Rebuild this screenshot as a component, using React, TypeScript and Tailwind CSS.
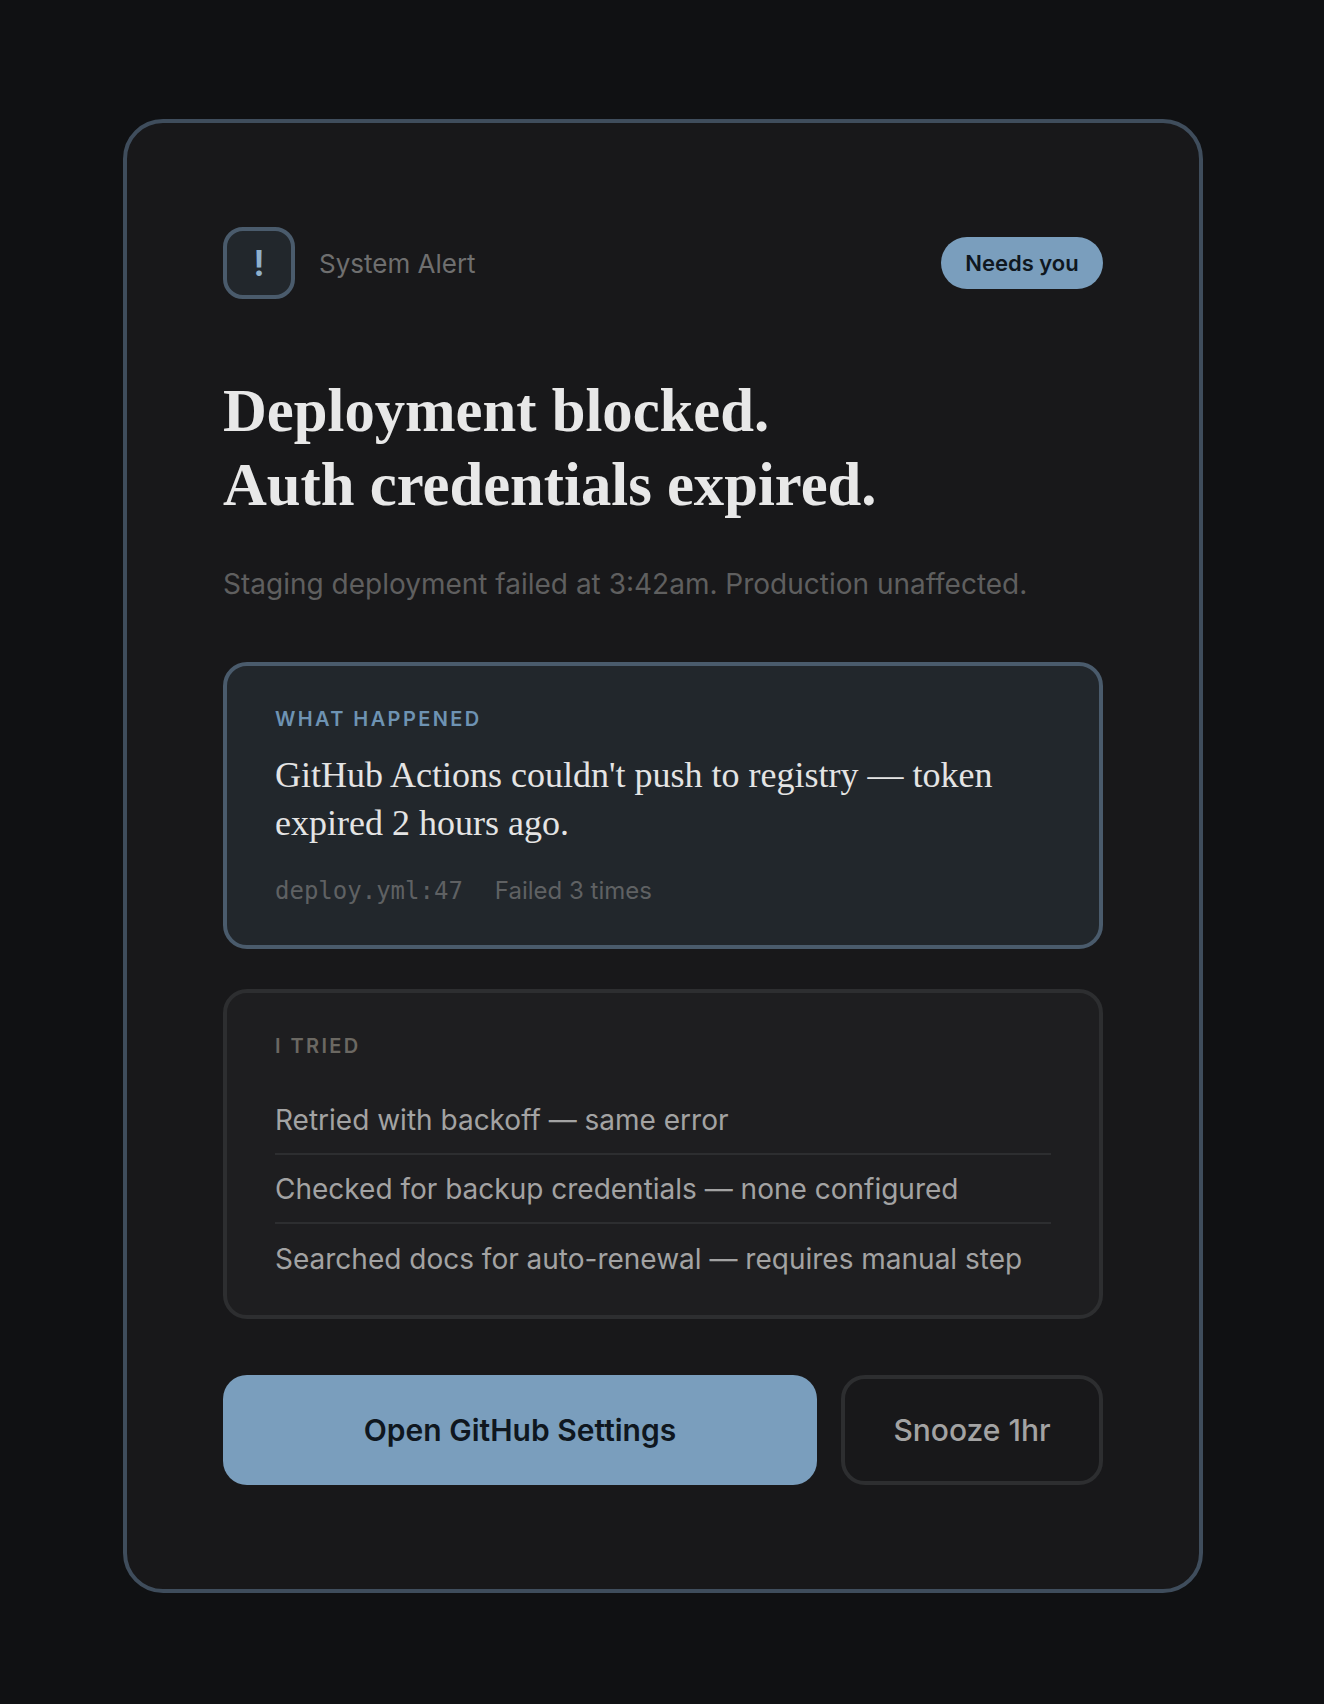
const tried = [
  "Retried with backoff — same error",
  "Checked for backup credentials — none configured",
  "Searched docs for auto-renewal — requires manual step",
];

const sans = "font-['Inter','Noto_Sans',sans-serif]";
const serif = "font-['Liberation_Serif','DejaVu_Serif',serif]";

export default function App() {
  return (
    <div className={`min-h-[1704px] w-full bg-[#101113] pt-[119px] ${sans}`}>
      <div className="ml-[123px] h-[1474px] w-[1080px] rounded-[40px] border-4 border-[#3f4d5c] bg-[#18181a] px-[96px] pt-[104px]">
        <div className="flex h-[72px] items-center justify-between">
          <div className="flex items-center gap-6">
            <div className="flex h-[72px] w-[72px] items-center justify-center rounded-[20px] border-4 border-[#4a5b6c] bg-[#22272c] text-[36px] font-semibold text-[#8fb0cc]">
              !
            </div>
            <span className="text-[26px] text-[#6f6f6f]">System Alert</span>
          </div>
          <div className="flex h-[52px] w-[162px] items-center justify-center rounded-full bg-[#7a9ebd] text-[22px] font-semibold text-[#0f1720]">
            Needs you
          </div>
        </div>

        <h1 className={`mt-[75px] text-[60.7px] leading-[74px] font-bold text-[#e8e8e8] ${serif}`}>
          Deployment blocked.
          <br />
          Auth credentials expired.
        </h1>
        <p className="mt-[42px] text-[28px] leading-[40px] text-[#5f5f5f]">
          Staging deployment failed at 3:42am. Production unaffected.
        </p>

        <section className="mt-[58px] h-[287px] rounded-3xl border-4 border-[#4a5b6c] bg-[#22272c] px-12 pt-[39px]">
          <div className="text-[20px] leading-[28px] font-semibold tracking-[2.4px] text-[#6e93b3]">WHAT HAPPENED</div>
          <p className={`mt-[18px] text-[36px] leading-[48px] text-[#e4e4e4] ${serif}`}>
            GitHub Actions couldn't push to registry — token
            <br />
            expired 2 hours ago.
          </p>
          <div className="mt-[28px] flex items-center gap-8 text-[24px] leading-[32px] text-[#5f6163]">
            <span className="font-['DejaVu_Sans_Mono','Liberation_Mono',monospace]">deploy.yml:47</span>
            <span>Failed 3 times</span>
          </div>
        </section>

        <section className="mt-10 h-[330px] rounded-3xl border-4 border-[#2d2e30] bg-[#1e1e20] px-12 pt-[39px]">
          <div className="text-[20px] leading-[28px] font-semibold tracking-[2.4px] text-[#6b6862]">I TRIED</div>
          <ul className="mt-[26px]">
            {tried.map((item, i) => (
              <li
                key={item}
                className={`flex h-[69px] items-center text-[28px] text-[#a3a3a3] ${i < 2 ? "border-b-2 border-[#2d2e30]" : ""}`}
              >
                {item}
              </li>
            ))}
          </ul>
        </section>

        <div className="mt-14 flex h-[110px] gap-6">
          <button className="h-full w-[594px] rounded-3xl bg-[#7a9ebd] text-[30px] font-semibold text-[#0f1720]">
            Open GitHub Settings
          </button>
          <button className="h-full w-[262px] rounded-3xl border-4 border-[#2d2e30] text-[30px] font-medium text-[#a3a3a3]">
            Snooze 1hr
          </button>
        </div>
      </div>
    </div>
  );
}
